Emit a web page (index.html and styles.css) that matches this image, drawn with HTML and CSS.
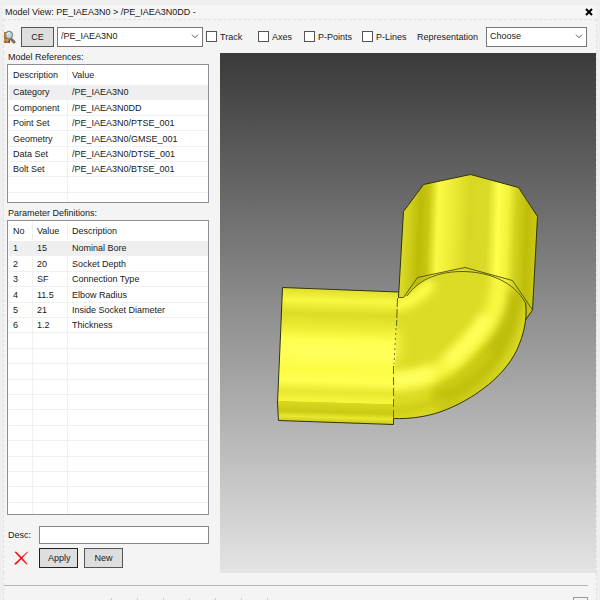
FILE: index.html
```html
<!DOCTYPE html>
<html lang="en">
<head>
<meta charset="utf-8">
<title>Model View</title>
<link rel="stylesheet" href="styles.css">
</head>
<body>
<div class="window">
  <header class="titlebar">
    <h1>Model View: PE_IAEA3N0 &gt; /PE_IAEA3N0DD -</h1>
    <button class="close" type="button" aria-label="Close">
      <svg viewBox="0 0 8 8" width="8" height="8"><path d="M1 1 7 7M7 1 1 7" stroke="#000" stroke-width="2"/></svg>
    </button>
  </header>

  <form class="toolbar">
    <svg class="find" viewBox="0 0 12 14" width="12" height="14" aria-hidden="true">
      <path d="M0 2h3v11H0z" fill="#b87532"/>
      <path d="M1 8h5v5H1z" fill="#8c5420"/>
      <path d="M0 10h5M3 8v5" stroke="#e0ad70"/>
      <path d="M6 8 10 12" stroke="#7d6e60" stroke-width="3" stroke-linecap="round"/>
      <circle cx="5" cy="5" r="3.5" fill="#bcdcec" stroke="#8a8a88" stroke-width="1.4"/>
      <path d="M3 4q1-2 3-1" fill="none" stroke="#fff"/>
    </svg>
    <button class="button" type="button">CE</button>
    <div class="picker">
      <select aria-label="Current element"><option>/PE_IAEA3N0</option></select>
      <svg viewBox="0 0 8 5" width="8" height="5"><path d="M1 .7 4 3.7 7 .7" fill="none" stroke="#555"/></svg>
    </div>
    <label class="check"><input type="checkbox">Track</label>
    <label class="check"><input type="checkbox">Axes</label>
    <label class="check"><input type="checkbox">P-Points</label>
    <label class="check"><input type="checkbox">P-Lines</label>
    <label for="representation">Representation</label>
    <div class="picker">
      <select id="representation"><option>Choose</option></select>
      <svg viewBox="0 0 8 5" width="8" height="5"><path d="M1 .7 4 3.7 7 .7" fill="none" stroke="#555"/></svg>
    </div>
  </form>

  <main class="content">
    <section class="side">
      <h2>Model References:</h2>
      <div class="list">
        <table>
          <colgroup><col class="wide"><col></colgroup>
          <thead><tr><th>Description</th><th>Value</th></tr></thead>
          <tbody>
            <tr class="selected"><td>Category</td><td>/PE_IAEA3N0</td></tr>
            <tr><td>Component</td><td>/PE_IAEA3N0DD</td></tr>
            <tr><td>Point Set</td><td>/PE_IAEA3N0/PTSE_001</td></tr>
            <tr><td>Geometry</td><td>/PE_IAEA3N0/GMSE_001</td></tr>
            <tr><td>Data Set</td><td>/PE_IAEA3N0/DTSE_001</td></tr>
            <tr><td>Bolt Set</td><td>/PE_IAEA3N0/BTSE_001</td></tr>
            <tr><td></td><td></td></tr>
            <tr><td></td><td></td></tr>
          </tbody>
        </table>
      </div>
      <h2>Parameter Definitions:</h2>
      <div class="list fill">
        <table>
          <colgroup><col class="narrow"><col class="medium"><col></colgroup>
          <thead><tr><th>No</th><th>Value</th><th>Description</th></tr></thead>
          <tbody>
            <tr class="selected"><td>1</td><td>15</td><td>Nominal Bore</td></tr>
            <tr><td>2</td><td>20</td><td>Socket Depth</td></tr>
            <tr><td>3</td><td>SF</td><td>Connection Type</td></tr>
            <tr><td>4</td><td>11.5</td><td>Elbow Radius</td></tr>
            <tr><td>5</td><td>21</td><td>Inside Socket Diameter</td></tr>
            <tr><td>6</td><td>1.2</td><td>Thickness</td></tr>
            <tr><td></td><td></td><td></td></tr>
            <tr><td></td><td></td><td></td></tr>
            <tr><td></td><td></td><td></td></tr>
            <tr><td></td><td></td><td></td></tr>
            <tr><td></td><td></td><td></td></tr>
            <tr><td></td><td></td><td></td></tr>
            <tr><td></td><td></td><td></td></tr>
            <tr><td></td><td></td><td></td></tr>
            <tr><td></td><td></td><td></td></tr>
            <tr><td></td><td></td><td></td></tr>
            <tr><td></td><td></td><td></td></tr>
            <tr><td></td><td></td><td></td></tr>
          </tbody>
        </table>
      </div>
      <form class="edit">
        <label for="desc">Desc:</label>
        <input id="desc" type="text">
        <button class="delete" type="button" aria-label="Delete">
          <svg viewBox="0 0 14 14" width="14" height="14"><path d="M.5 1 2 .5 7.5 6 13.5 13 12.5 13.5 6.5 7.5Z" fill="#f01010"/><path d="M13.5.5 14 1 7.5 8 2 13.5.5 13.5.5 12.5 6 7.5Z" fill="#f01010"/></svg>
        </button>
        <div class="actions">
          <button class="button primary" type="button">Apply</button>
          <button class="button" type="button">New</button>
        </div>
      </form>
    </section>

    <section class="viewport" aria-label="3D model">
      <svg viewBox="220 53 376 520" role="img" aria-label="Elbow fitting">
        <defs>
          <linearGradient id="up" gradientUnits="userSpaceOnUse" x1="400" y1="240" x2="537" y2="245">
            <stop offset="0" stop-color="#dede28"/><stop offset=".08" stop-color="#cccc18"/>
            <stop offset=".14" stop-color="#bcbc08"/><stop offset=".2" stop-color="#c8c812"/>
            <stop offset=".27" stop-color="#fafa44"/><stop offset=".36" stop-color="#eeee38"/>
            <stop offset=".5" stop-color="#d8d824"/><stop offset=".63" stop-color="#dada28"/>
            <stop offset=".71" stop-color="#ffff4c"/><stop offset=".78" stop-color="#f2f23a"/>
            <stop offset=".84" stop-color="#d2d21e"/><stop offset=".92" stop-color="#bebe0a"/>
            <stop offset="1" stop-color="#cccc16"/>
          </linearGradient>
          <linearGradient id="left" gradientUnits="userSpaceOnUse" x1="340" y1="289" x2="336" y2="423">
            <stop offset="0" stop-color="#dede2a"/><stop offset=".09" stop-color="#f8f842"/>
            <stop offset=".19" stop-color="#dcdc26"/><stop offset=".28" stop-color="#eaea32"/>
            <stop offset=".39" stop-color="#ffff4e"/><stop offset=".47" stop-color="#ffff5c"/>
            <stop offset=".6" stop-color="#fcfc44"/><stop offset=".69" stop-color="#ffff50"/>
            <stop offset=".77" stop-color="#e8e830"/><stop offset=".845" stop-color="#f6f63c"/>
            <stop offset=".85" stop-color="#d8d820"/><stop offset=".92" stop-color="#caca16"/>
            <stop offset=".96" stop-color="#e8e830"/><stop offset="1" stop-color="#c8c814"/>
          </linearGradient>
          <clipPath id="bend"><path d="M398 297 403 297.500 407 296C420 278 440 271.500 463 271.500 490 272 514 282 525 303 527 313 526 328 519 345 508 374 474 400 440 412 425 417 410 419 393.500 418.500Z"/></clipPath>
          <filter id="soft" filterUnits="userSpaceOnUse" x="340" y="220" width="240" height="240"><feGaussianBlur stdDeviation="4"/></filter>
          <filter id="softer" filterUnits="userSpaceOnUse" x="340" y="220" width="240" height="240"><feGaussianBlur stdDeviation="7"/></filter>
        </defs>
        <path d="M398.500 297.500 403.500 211.500 423.500 184.500 470.500 174.500 518.500 187.500 537.500 216.500 532.500 310 525 320 518 332 410 320Z" fill="url(#up)"/>
        <path d="M282.500 287.500 398.500 292 393.500 424.500 278.500 420.500 277.500 403Z" fill="url(#left)"/>
        <g clip-path="url(#bend)" fill="none">
          <path d="M380 260H540V430H380Z" fill="#dcdc27"/>
          <path d="M435 402C475 388 508 350 516 290" stroke="#bebe0c" stroke-width="24" filter="url(#soft)"/>
          <path d="M380 412Q415 412 445 400" stroke="#caca16" stroke-width="9" filter="url(#soft)"/>
          <path d="M370 345H398" stroke="#ffff4e" stroke-width="30" filter="url(#softer)"/>
          <path d="M380 306Q412 308 432 282" stroke="#ffff4c" stroke-width="12" filter="url(#soft)"/>
          <path d="M375 381C435 384 452 364 474 340S500 305 500 260" stroke="#f8f842" stroke-width="18" filter="url(#soft)"/>
          <path d="M375 380Q414 382 432 372" stroke="#ffff60" stroke-width="14" filter="url(#soft)"/>
          <path d="M447 362Q474 338 486 317" stroke="#ffff5c" stroke-width="12" filter="url(#soft)"/>
          <path d="M440 388Q470 378 490 350" stroke="#cccc18" stroke-width="9" filter="url(#soft)"/>
          <path d="M525 300C527 345 488 403 393 420" stroke="#dcdc24" stroke-width="5" opacity=".6" filter="url(#soft)"/>
        </g>
        <g fill="none" stroke="#34340c" stroke-linejoin="round">
          <path d="M398.500 297.500 403.500 211.500 423.500 184.500 470.500 174.500 518.500 187.500 537.500 216.500 532.500 310 525.500 320"/>
          <path d="M398.500 292 282.500 287.500 280.500 335 277.500 403 278.500 420.500 393.500 424.500V418.500C410 419 425 417 440 412 474 400 508 374 519 345 526 328 527 313 525.500 303"/>
          <path d="M398.500 297.500H403.500L417.500 277.500 465 267.500 512.500 280.500 532.500 310M407 296C420 278 440 271.500 463 271.500 490 272 514 282 525.500 303" stroke="#5a5a10"/>
          <path d="M397.500 298 396.500 326" stroke="#68681a" stroke-dasharray="9 2"/>
          <path d="M396 328 394 364" stroke="#77771c" stroke-dasharray="2 3"/>
          <path d="M393.500 366V419" stroke="#68681a" stroke-dasharray="8 3"/>
        </g>
      </svg>
    </section>
  </main>

  <footer class="footer">
    <div class="ticks"><i></i><i></i><i></i><i></i><i></i><i></i><i></i></div>
    <div class="corner"></div>
  </footer>
</div>
</body>
</html>
```
FILE: styles.css
```css
* {
  box-sizing: border-box;
}

body {
  margin: 0;
  background: #efefef;
  color: #202020;
  font: 9px/12px "Liberation Sans", Arial, sans-serif;
}

button,
input,
select {
  margin: 0;
  font: inherit;
  color: inherit;
}

h1,
h2 {
  margin: 0;
  font: inherit;
}

.window {
  display: flex;
  flex-direction: column;
  height: 100vh;
  min-height: 480px;
  padding: 5px 3px 0;
}

.titlebar {
  display: flex;
  justify-content: space-between;
  align-items: center;
  height: 14px;
  padding: 0 4px 0 2px;
  background: #f5f5f5;
}

.close {
  display: flex;
  padding: 0;
  border: 0;
  background: none;
}

.toolbar {
  display: grid;
  grid-template-columns: 17px 36px 149px 52px 46px 58px 55px 69px minmax(80px, 101px);
  align-items: center;
  height: 34px;
  border: 1px dashed #dfdfdf;
  border-bottom: 0;
  background: #f4f4f4;
}

.button {
  height: 20px;
  padding: 0 8px;
  border: 1px solid #555;
  background: #dedede;
  white-space: nowrap;
}

.toolbar .button {
  width: 33px;
}

.picker {
  display: grid;
  align-items: center;
  height: 20px;
}

.picker select,
.picker svg {
  grid-area: 1 / 1;
}

.picker select {
  width: 100%;
  height: 20px;
  padding: 0 16px 2px 3px;
  border: 1px solid #777;
  border-radius: 0;
  background: #fff;
  appearance: none;
}

.picker svg {
  justify-self: end;
  margin-right: 4px;
  pointer-events: none;
}

.toolbar .picker:nth-child(3) {
  margin-right: 3px;
}

.check {
  display: flex;
  align-items: center;
  gap: 3px;
  white-space: nowrap;
}

.check input {
  width: 11px;
  height: 11px;
  border: 1px solid #555;
  background: #fff;
  appearance: none;
}

.content {
  display: grid;
  flex: 1;
  grid-template-columns: 216px 1fr;
  min-height: 0;
  border: 1px dashed #dfdfdf;
  border-width: 0 1px;
  background: #f4f4f4;
}

.side {
  display: flex;
  flex-direction: column;
  min-height: 0;
  padding: 0 11px 0 3px;
}

.side h2 {
  height: 11px;
  padding-left: 1px;
  line-height: 9px;
}

.list {
  flex: none;
  height: 139px;
  overflow: hidden;
  border: 1px solid #8d9099;
  background: #fff;
}

.list + h2 {
  height: 17px;
  line-height: 20px;
}

.list.fill {
  flex: 1;
}

table {
  width: 100%;
  table-layout: fixed;
  border-collapse: separate;
  border-spacing: 0;
}

.wide {
  width: 59px;
}

.narrow {
  width: 24px;
}

.medium {
  width: 35px;
}

th,
td {
  height: 15px;
  padding: 0 0 0 4px;
  border-bottom: 1px solid #f0f0f0;
  border-left: 1px solid #f0f0f0;
  font-weight: 400;
  text-align: left;
  white-space: nowrap;
}

th {
  height: 20px;
  border-bottom-color: #fff;
}

th:first-child,
td:first-child {
  border-left-color: #fff;
}

tbody tr:nth-child(5n + 2) td,
tbody tr:nth-child(5n + 4) td {
  height: 16px;
}

.selected td {
  background: #efefef;
}

.edit {
  display: grid;
  grid-template-columns: 32px 1fr;
  gap: 4px 0;
  align-items: center;
  padding: 11px 0 5px;
}

.edit label {
  padding-left: 1px;
}

.edit input {
  width: 100%;
  height: 18px;
  border: 1px solid #858585;
  background: #fff;
}

.delete {
  display: flex;
  padding: 0 0 0 7px;
  border: 0;
  background: none;
}

.actions {
  display: flex;
  gap: 6px;
}

.actions .button {
  width: 39px;
}

.button.primary {
  border-color: #222;
}

.viewport {
  min-width: 0;
  min-height: 0;
  background: linear-gradient(#3a3a3a, #e4e4e4);
}

.viewport svg {
  display: block;
  width: 100%;
  height: 100%;
}

.footer {
  display: grid;
  grid-template-columns: 1fr 15px;
  align-content: space-between;
  height: 27px;
  padding: 0 8px 0 0;
  border: 1px dashed #dfdfdf;
  border-width: 0 1px;
  background: #f4f4f4;
}

.footer::before {
  grid-column: 1 / -1;
  height: 1px;
  margin-top: 12px;
  border-top: 1px solid #b8b8b8;
  content: "";
}

.ticks {
  display: flex;
  gap: 25px;
  align-items: end;
  padding-left: 107px;
}

.ticks i {
  width: 1px;
  height: 2px;
  background: #ccc;
}

.corner {
  height: 3px;
  border: 1px solid #999;
  border-bottom: 0;
}
```
